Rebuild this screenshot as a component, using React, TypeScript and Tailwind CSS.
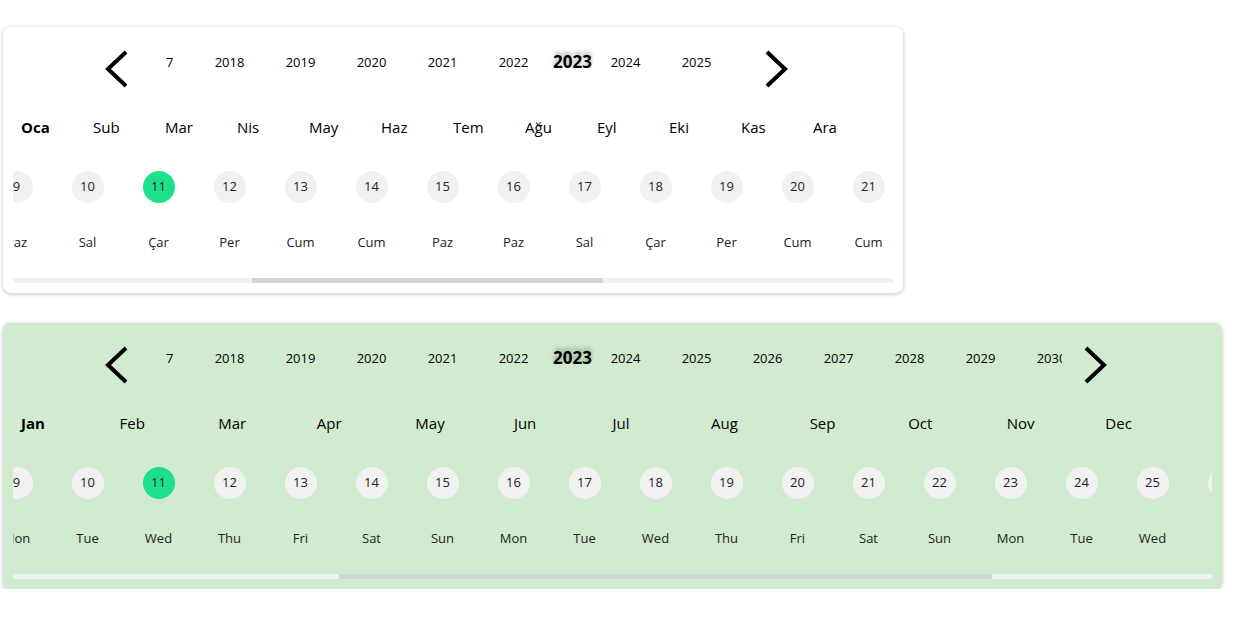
import React from 'react';

// Yatay kaydırmalı tarih seçici - iki tema

interface PickerProps {
  width: string;
  bg: string;
  months: string[];
  dayNames: string[];
  years: number[];
  thumb: { left: string; width: string };
}

function Chevron({ dir }: { dir: 'left' | 'right' }) {
  return (
    <svg width="23" height="38" viewBox="0 0 23 38" className="shrink-0">
      <polyline
        points={dir === 'left' ? '21,2 3,19 21,36' : '2,2 20,19 2,36'}
        fill="none"
        stroke="#000"
        strokeWidth="4"
      />
    </svg>
  );
}

function DatePicker({ width, bg, months, dayNames, years, thumb }: PickerProps) {
  const days = Array.from({ length: 23 }, (_, i) => i + 9);

  return (
    <div className={`${width} ${bg} h-[266px] rounded-lg shadow-[0_1px_4px_rgba(0,0,0,0.25)] flex flex-col`}>
      {/* yıllar */}
      <div className="flex items-start pl-[102px] pr-[115px] mt-[23px] h-[38px]">
        <Chevron dir="left" />
        <div className="flex-1 ml-[36px] mr-[22px] overflow-hidden -mt-[2px] h-[30px]">
          <div className="flex items-center h-[30px] -ml-[41px] whitespace-nowrap">
            <span className="w-[71px] shrink-0 text-center text-[13px]">2017</span>
            {years.map((y) =>
              y === 2023 ? (
                <span
                  key={y}
                  className="w-[41px] shrink-0 pl-[6px] flex justify-center text-[17px] font-bold -mt-[3px] [text-shadow:0_-3px_4px_rgba(0,0,0,0.3)]"
                >
                  {y}
                </span>
              ) : (
                <span key={y} className="w-[71px] shrink-0 text-center text-[13px]">
                  {y}
                </span>
              )
            )}
          </div>
        </div>
        <Chevron dir="right" />
      </div>

      {/* aylar */}
      <div className="flex px-[18px] mt-[29px] h-[20px] items-center">
        {months.map((m, idx) => (
          <span key={m} className={`flex-1 text-[15px] ${idx === 0 ? 'font-bold' : ''}`}>
            {m}
          </span>
        ))}
      </div>

      {/* günler */}
      <div className="mx-[10px] mt-[34px] overflow-hidden">
        <div className="flex -ml-[32px]">
          {days.map((d, idx) => (
            <div key={d} className="w-[71px] shrink-0 flex flex-col items-center">
              <div
                className={`w-8 h-8 rounded-full flex items-center justify-center text-[13px] text-[#222] ${
                  d === 11 ? 'bg-[#1ee08a]' : 'bg-[#f1f1f1]'
                }`}
              >
                {d}
              </div>
              <span className="mt-[29px] h-[20px] leading-[20px] text-[13px] text-[#222] whitespace-nowrap">
                {dayNames[idx % dayNames.length]}
              </span>
            </div>
          ))}
        </div>
      </div>

      {/* kaydırma çubuğu */}
      <div className="mx-[10px] mt-[26px] h-[5px] bg-[#f1f1f1] relative">
        <div className={`absolute top-0 h-[5px] bg-[#d4d4d4] ${thumb.left} ${thumb.width}`} />
      </div>
    </div>
  );
}

export default function App() {
  return (
    <div className="pt-[27px] pl-[3px] text-black [font-family:'Open_Sans','Noto_Sans',sans-serif]">
      <DatePicker
        width="w-[900px]"
        bg="bg-white"
        months={['Oca', 'Sub', 'Mar', 'Nis', 'May', 'Haz', 'Tem', 'Ağu', 'Eyl', 'Eki', 'Kas', 'Ara']}
        dayNames={['Paz', 'Sal', 'Çar', 'Per', 'Cum', 'Cum', 'Paz', 'Paz', 'Sal', 'Çar', 'Per', 'Cum', 'Cum', 'Paz', 'Paz', 'Sal', 'Çar', 'Per', 'Cum', 'Cum', 'Paz', 'Paz', 'Sal']}
        years={[2018, 2019, 2020, 2021, 2022, 2023, 2024, 2025, 2026, 2027]}
        thumb={{ left: 'left-[239px]', width: 'w-[351px]' }}
      />
      <div className="mt-[30px]">
        <DatePicker
          width="w-[1219px]"
          bg="bg-[#d0ebcf]"
          months={['Jan', 'Feb', 'Mar', 'Apr', 'May', 'Jun', 'Jul', 'Aug', 'Sep', 'Oct', 'Nov', 'Dec']}
          dayNames={['Mon', 'Tue', 'Wed', 'Thu', 'Fri', 'Sat', 'Sun']}
          years={[2018, 2019, 2020, 2021, 2022, 2023, 2024, 2025, 2026, 2027, 2028, 2029, 2030, 2031]}
          thumb={{ left: 'left-[326px]', width: 'w-[653px]' }}
        />
      </div>
    </div>
  );
}
